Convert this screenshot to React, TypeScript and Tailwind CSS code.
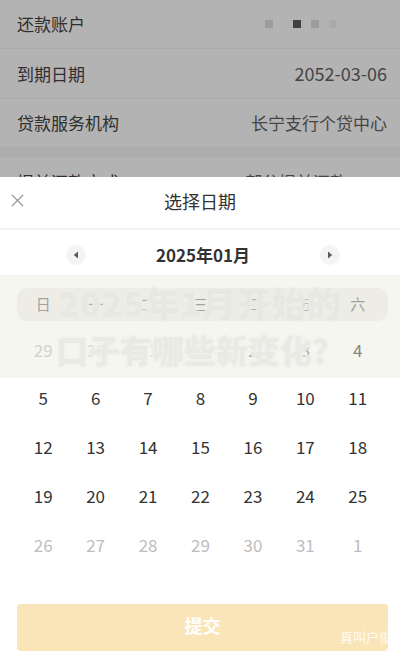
import { X } from 'lucide-react';

const font = { fontFamily: '"Noto Sans CJK SC", "Noto Sans", sans-serif' };

const weekdays = ['日', '一', '二', '三', '四', '五', '六'];

// 日历格子，muted 表示非本月日期
const weeks: { d: number; muted?: boolean }[][] = [
  [{ d: 29, muted: true }, { d: 30, muted: true }, { d: 31, muted: true }, { d: 1 }, { d: 2 }, { d: 3 }, { d: 4 }],
  [5, 6, 7, 8, 9, 10, 11].map(d => ({ d })),
  [12, 13, 14, 15, 16, 17, 18].map(d => ({ d })),
  [19, 20, 21, 22, 23, 24, 25].map(d => ({ d })),
  [26, 27, 28, 29, 30, 31, 1].map(d => ({ d, muted: true })),
];

function Row({ label, value }: { label: string; value: React.ReactNode }) {
  return (
    <div className="flex items-center justify-between h-[50px] pl-[17px] pr-[13px] border-b border-[#a9a9a9]">
      <span className="text-[17px] text-[#2f2f2f]">{label}</span>
      <span className="text-[18px] text-[#454545]">{value}</span>
    </div>
  );
}

function Arrow({ dir }: { dir: 'left' | 'right' }) {
  return (
    <div className="w-[20px] h-[20px] rounded-full bg-[#f4f4f4] flex items-center justify-center">
      <svg width="6" height="8" viewBox="0 0 6 8">
        {dir === 'left'
          ? <path d="M5 0.5 L0.8 4 L5 7.5 Z" fill="#5a5a5a" />
          : <path d="M1 0.5 L5.2 4 L1 7.5 Z" fill="#5a5a5a" />}
      </svg>
    </div>
  );
}

export default function App() {
  return (
    <div className="relative w-[400px] h-[655px] overflow-hidden bg-[#b3b3b3]" style={font}>
      {/* 背景页面（被遮罩） */}
      <div className="flex flex-col">
        <div className="flex items-center justify-between h-[48px] pl-[17px] pr-[13px] border-b border-[#a9a9a9] -mt-[6px] pt-[6px] box-content">
          <span className="text-[17px] text-[#2f2f2f]">还款账户</span>
          <div className="flex items-center pr-[51px]">
            <span className="w-[8px] h-[8px] bg-[#9c9c9c]" />
            <span className="ml-[20px] w-[8px] h-[8px] bg-[#414141]" />
            <span className="ml-[10px] w-[8px] h-[8px] bg-[#9c9c9c]" />
            <span className="ml-[10px] w-[7px] h-[8px] bg-[#a9a9a9]" />
          </div>
        </div>
        <Row label="到期日期" value="2052-03-06" />
        <div className="flex items-center justify-between h-[48px] pl-[17px] pr-[13px]">
          <span className="text-[17px] text-[#2f2f2f]">贷款服务机构</span>
          <span className="text-[17px] text-[#454545]">长宁支行个贷中心</span>
        </div>
        <div className="h-[10px] bg-[#acacac]" />
        <div className="flex items-center justify-between h-[49px] pl-[17px] pr-[13px]">
          <span className="text-[17px] text-[#2f2f2f]">提前还款方式</span>
          <span className="text-[17px] text-[#454545] pr-[40px]">部分提前还款</span>
        </div>
      </div>

      {/* 选择日期弹层 */}
      <div className="absolute left-0 right-0 bottom-0 h-[478px] bg-white flex flex-col">
        <div className="relative h-[53px] flex items-center justify-center border-b-2 border-[#f3f3f3]">
          <X className="absolute left-[7px] top-[13px] text-[#9a9a9a]" size={21} strokeWidth={1.5} />
          <span className="text-[18px] text-[#333333] -mt-[3px]">选择日期</span>
        </div>

        <div className="h-[45px] pt-[5px] flex items-center justify-between pl-[66px] pr-[60px]">
          <Arrow dir="left" />
          <span className="text-[17px] font-bold text-[#333333]">2025年01月</span>
          <Arrow dir="right" />
        </div>

        <div className="relative">
          <div className="mt-[13px] ml-[17px] mr-[12px] h-[33px] rounded-[10px] bg-[#eeeee9] grid grid-cols-7 items-center pr-[4px]">
            {weekdays.map(w => (
              <span key={w} className="text-center text-[15px] text-[#666666]">{w}</span>
            ))}
          </div>

          <div className="mt-[4px] pl-[17px] pr-[16px] flex flex-col">
            {weeks.map((week, i) => (
              <div key={i} className="grid grid-cols-7 h-[48.75px] items-center">
                {week.map((c, j) => (
                  <span
                    key={j}
                    className={`text-center text-[17px] ${c.muted ? 'text-[#bdbdbd]' : 'text-[#333333]'}`}
                  >
                    {c.d}
                  </span>
                ))}
              </div>
            ))}
          </div>

          {/* 截图上的水印横幅 */}
          <div className="absolute left-0 right-0 top-0 h-[103px] bg-[#ecece0]/45 flex flex-col items-center pointer-events-none">
            <span className="mt-[8px] text-[34px] leading-[40px] font-black text-[#e8e8e2] tracking-[1px] [text-shadow:0_0_3px_#efefea,0_0_3px_#efefea,0_0_3px_#efefea]">
              2025年1月开始的
            </span>
            <span className="mt-[6px] text-[32px] leading-[40px] font-black text-[#eaeae4] [text-shadow:0_0_4px_#f2f2ed,0_0_4px_#f2f2ed,0_0_4px_#f2f2ed,0_0_4px_#f2f2ed]">
              口子有哪些新变化？
            </span>
          </div>
        </div>

        <div className="relative mt-[35px] mr-[12px] ml-[17px] h-[47px] rounded-[4px] bg-[#fae5b9] flex items-center justify-center">
          <span className="text-[18px] font-bold text-white -mt-[3px]">提交</span>
          <span className="absolute right-[-4px] bottom-[4px] text-[13px] text-white/80">真叫户俊</span>
        </div>
      </div>
    </div>
  );
}
